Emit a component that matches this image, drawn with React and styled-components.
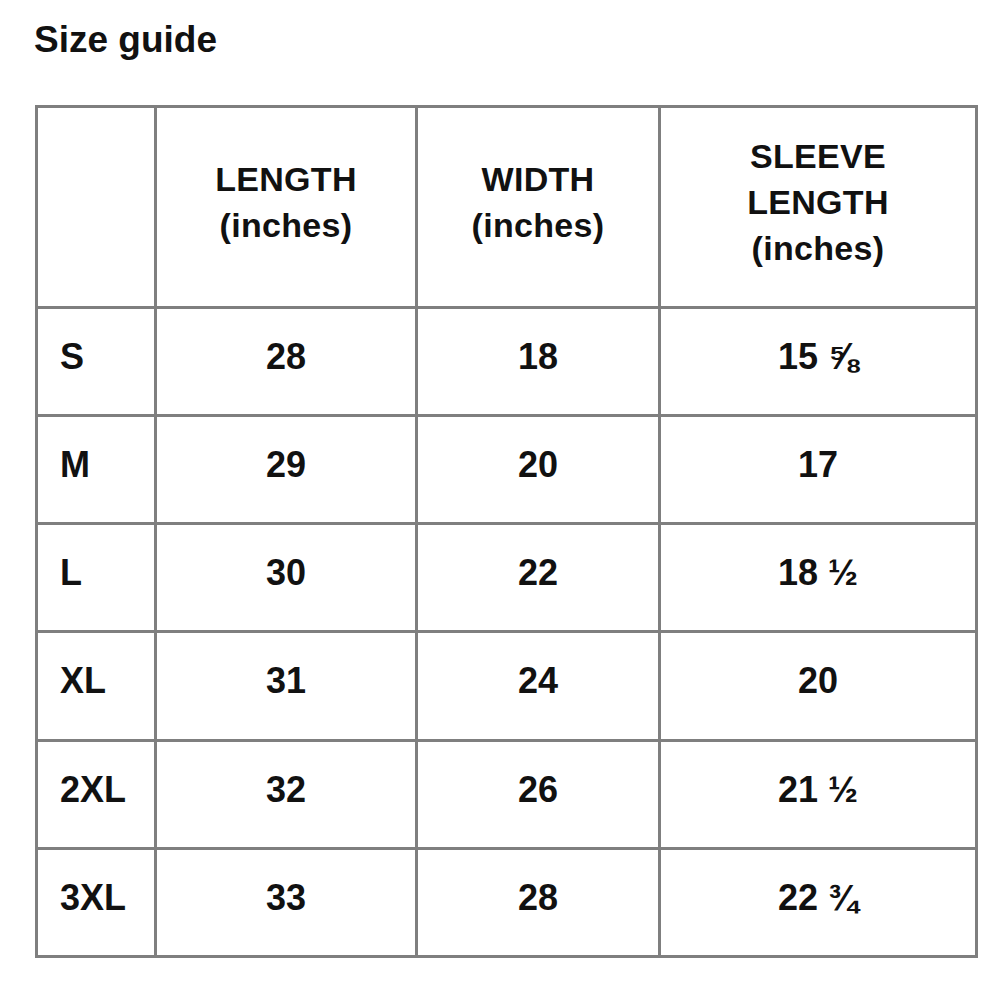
import React from "react";
import styled, { createGlobalStyle } from "styled-components";

const GlobalStyle = createGlobalStyle`
  html, body {
    margin: 0;
    padding: 0;
    background: #ffffff;
  }
  body {
    font-family: "Liberation Sans", Arial, Helvetica, sans-serif;
    color: #111111;
  }
`;

const Page = styled.div`
  width: 1000px;
  height: 1000px;
  padding: 21px 0 0 34px;
  box-sizing: border-box;
  background: #fff;
`;

const Title = styled.h1`
  margin: 0 0 47px 0;
  font-size: 37px;
  line-height: 37px;
  font-weight: 700;
  color: #111;
`;

const Grid = styled.div`
  display: grid;
  grid-template-columns: 116px 258px 240px 314px;
  grid-template-rows: 198px 105px 105px 105px 106px 105px 105px;
  gap: 3px;
  padding: 3px;
  margin-left: 1px;
  width: max-content;
  background: #7f7f7f;
`;

const Cell = styled.div`
  background: #fff;
  display: flex;
  align-items: center;
  justify-content: ${(p) => (p.$left ? "flex-start" : "center")};
  padding: ${(p) => (p.$left ? "0 0 10px 22px" : "0 0 10px 0")};
  box-sizing: border-box;
  font-weight: 700;
  font-size: 36px;
  color: #111;
`;

const HeadCell = styled(Cell)`
  text-align: center;
  font-size: 34px;
  line-height: 46px;
  letter-spacing: 0.3px;
`;

const headers = [
  ["LENGTH", "(inches)"],
  ["WIDTH", "(inches)"],
  ["SLEEVE", "LENGTH", "(inches)"],
];

const rows = [
  ["S", "28", "18", "15 ⅝"],
  ["M", "29", "20", "17"],
  ["L", "30", "22", "18 ½"],
  ["XL", "31", "24", "20"],
  ["2XL", "32", "26", "21 ½"],
  ["3XL", "33", "28", "22 ¾"],
];

export default function App() {
  return (
    <>
      <GlobalStyle />
      <Page>
        <Title>Size guide</Title>
        <Grid>
          <HeadCell />
          {headers.map((lines, i) => (
            <HeadCell key={i}>
              <div>
                {lines.map((l, j) => (
                  <div key={j}>{l}</div>
                ))}
              </div>
            </HeadCell>
          ))}
          {rows.map((r) =>
            r.map((v, i) => (
              <Cell key={r[0] + i} $left={i === 0}>
                {v}
              </Cell>
            ))
          )}
        </Grid>
      </Page>
    </>
  );
}
